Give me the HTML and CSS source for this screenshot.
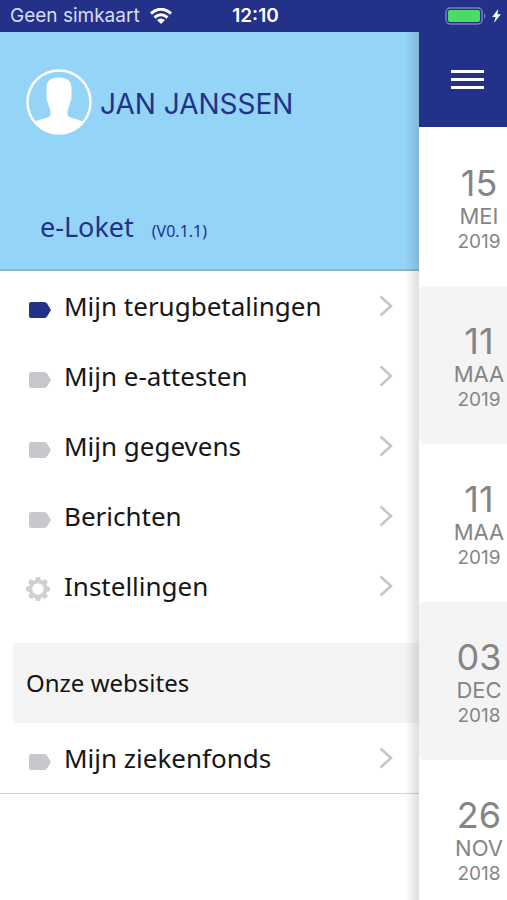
FILE: index.html
```html
<!DOCTYPE html>
<html lang="nl">
<head>
<meta charset="utf-8">
<meta name="viewport" content="width=device-width, initial-scale=1">
<title>e-Loket</title>
<link rel="stylesheet" href="styles.css">
</head>
<body>
<svg class="symbols" aria-hidden="true">
  <symbol id="tag" viewBox="0 0 22 16"><path d="M2 0h13q2 0 3 1.500L22 8l-4 6.500q-1 1.500-3 1.500H2q-2 0-2-2V2q0-2 2-2z"/></symbol>
  <symbol id="chevron" viewBox="0 0 14 22"><path d="M1.500 1.500 12 11 1.500 20.500" fill="none" stroke="currentColor" stroke-width="2.500"/></symbol>
</svg>
<header class="status">
  <div class="carrier">
    <span>Geen simkaart</span>
    <svg class="wifi" viewBox="0 0 22 16" aria-hidden="true"><path d="M1 5.500Q11-3 21 5.500M4.500 9.500Q11 4 17.500 9.500" fill="none" stroke="#fff" stroke-width="3"/><path d="M7 12q4-3 8 0L11 16z" fill="#fff"/></svg>
  </div>
  <time class="clock">12:10</time>
  <div class="power">
    <svg class="battery" viewBox="0 0 42 18" aria-hidden="true"><rect x="1" y="1" width="36" height="16" rx="4" fill="none" stroke="#7580bd" stroke-width="1.500"/><rect x="3" y="3" width="32" height="12" rx="2" fill="#4cdb62"/><path d="M39 6q3 3 0 6z" fill="#7580bd"/></svg>
    <svg class="bolt" viewBox="0 0 10 16" aria-hidden="true"><path d="M7 0 0 9h4l-2 7 8-10H6z" fill="#fff"/></svg>
  </div>
</header>
<div class="app">
  <aside class="drawer">
    <div class="profile">
      <div class="user">
        <svg class="avatar" viewBox="0 0 66 66" aria-hidden="true"><circle cx="33" cy="33" r="31.500" fill="none" stroke="#fff" stroke-width="2.500"/><path d="M33 8.500c8 0 12.500 3.500 12.500 10V28c0 4-1.500 5-2 8-.5 3-2 4-2 7v2c0 3 4 4 8 5 4 1 6 2 8.500 3A32 32 0 0 1 8 53c2.500-1 4.500-2 8.500-3 4-1 8-2 8-5v-2c0-3-1.500-4-2-7-.5-3-2-4-2-8v-9.500c0-6.500 4.500-10 12.500-10z" fill="#fff"/></svg>
        <span class="name">JAN JANSSEN</span>
      </div>
      <div class="brand"><h1>e-Loket</h1><span class="version">(V0.1.1)</span></div>
    </div>
    <nav>
      <ul class="menu">
        <li><a href="#terugbetalingen" class="active"><svg class="tag"><use href="#tag"/></svg><span>Mijn terugbetalingen</span><svg class="chevron"><use href="#chevron"/></svg></a></li>
        <li><a href="#attesten"><svg class="tag"><use href="#tag"/></svg><span>Mijn e-attesten</span><svg class="chevron"><use href="#chevron"/></svg></a></li>
        <li><a href="#gegevens"><svg class="tag"><use href="#tag"/></svg><span>Mijn gegevens</span><svg class="chevron"><use href="#chevron"/></svg></a></li>
        <li><a href="#berichten"><svg class="tag"><use href="#tag"/></svg><span>Berichten</span><svg class="chevron"><use href="#chevron"/></svg></a></li>
        <li><a href="#instellingen"><svg class="gear" viewBox="-12 -12 24 24"><circle r="7.500" fill="none" stroke="currentColor" stroke-width="3.500"/><g id="teeth"><path d="M-3.200-8-2-12h4l1.200 4zM-3.200 8-2 12h4l1.200-4z"/><path d="M-3.200-8-2-12h4l1.200 4zM-3.200 8-2 12h4l1.200-4z" transform="rotate(90)"/></g><use href="#teeth" transform="rotate(45)"/></svg><span>Instellingen</span><svg class="chevron"><use href="#chevron"/></svg></a></li>
      </ul>
      <h2>Onze websites</h2>
      <ul class="menu sites">
        <li><a href="#ziekenfonds"><svg class="tag"><use href="#tag"/></svg><span>Mijn ziekenfonds</span><svg class="chevron"><use href="#chevron"/></svg></a></li>
      </ul>
    </nav>
  </aside>
  <main class="page">
    <div class="toolbar"><button type="button" aria-label="Menu"><i></i><i></i><i></i></button></div>
    <ol class="dates">
      <li><b>15</b><span>MEI</span><small>2019</small></li>
      <li><b>11</b><span>MAA</span><small>2019</small></li>
      <li><b>11</b><span>MAA</span><small>2019</small></li>
      <li><b>03</b><span>DEC</span><small>2018</small></li>
      <li><b>26</b><span>NOV</span><small>2018</small></li>
    </ol>
  </main>
</div>
</body>
</html>
```
FILE: styles.css
```css
* { box-sizing: border-box; }
body {
  margin: 0;
  height: 100vh;
  display: flex;
  flex-direction: column;
  overflow: hidden;
  background: #fff;
  color: #161616;
  font-family: "Noto Sans", "Open Sans", sans-serif;
}
ul, ol { margin: 0; padding: 0; list-style: none; }
h1, h2 { margin: 0; font-weight: 400; }
.symbols { display: none; }

.status {
  flex: none;
  height: 32px;
  padding: 0 6px 0 10px;
  display: grid;
  grid-template-columns: 1fr auto 1fr;
  align-items: center;
  background: #243189;
  color: #fff;
  font: 19px/32px Inter, sans-serif;
}
.carrier { display: flex; align-items: center; gap: 10px; color: #d9dcf2; }
.wifi { width: 22px; height: 16px; }
.clock { font-weight: 600; }
.power { display: flex; justify-content: flex-end; align-items: center; gap: 5px; }
.battery { width: 42px; height: 18px; }
.bolt { width: 9px; height: 14px; }

.app {
  flex: 1;
  min-height: 0;
  display: grid;
  grid-template-columns: 1fr 88px;
}
.drawer {
  position: relative;
  min-width: 0;
}
/* Shade cast by the page on the drawer's right edge */
.drawer::after {
  content: "";
  position: absolute;
  inset: 0 0 0 auto;
  width: 14px;
  background: linear-gradient(to right, rgba(0, 0, 0, 0), rgba(0, 0, 0, 0.13));
  pointer-events: none;
}
.profile {
  height: 239px;
  padding: 37px 26px 24px;
  display: flex;
  flex-direction: column;
  justify-content: space-between;
  background: #94d4f6;
  border-bottom: 2px solid #8fb4cb;
  color: #243189;
}
.user { display: flex; align-items: center; gap: 8px; }
.avatar { width: 66px; height: 66px; }
.name { padding-top: 4px; font: 28px/32px Inter, sans-serif; }
.brand { display: flex; align-items: baseline; gap: 18px; padding-left: 14px; }
.brand h1 { font-size: 27px; line-height: 36px; }
.version { font-size: 16px; }

.menu a {
  height: 70px;
  padding: 0 26px 0 29px;
  display: flex;
  align-items: center;
  gap: 13px;
  color: #161616;
  text-decoration: none;
  font-size: 26px;
  line-height: 34px;
}
.menu span { flex: 1; }
.tag { width: 22px; height: 16px; margin-top: 8px; fill: #c8c8cc; }
.active .tag { fill: #243189; }
.gear { width: 24px; height: 24px; margin: 6px 1px 0 -3px; color: #d0d0d2; fill: currentColor; }
.chevron { width: 14px; height: 22px; color: #c5c5c7; }
h2 {
  margin: 22px 0 0 13px;
  padding: 0 13px;
  background: #f4f4f4;
  font-size: 24px;
  line-height: 80px;
}
.sites { border-bottom: 1px solid #d2d2d2; }

.page { min-width: 0; overflow: hidden; }
.toolbar {
  height: 95px;
  display: flex;
  align-items: center;
  padding-left: 32px;
  background: #243189;
}
.toolbar button {
  width: 33px;
  padding: 0;
  border: 0;
  background: none;
  display: grid;
  gap: 5px;
}
.toolbar i { height: 3px; background: #fff; }
.dates { width: 120px; padding-top: 1px; }
.dates li {
  height: 158px;
  padding-top: 34px;
  display: flex;
  flex-direction: column;
  align-items: center;
  border-radius: 6px;
  color: #858585;
  font-family: Inter, sans-serif;
}
.dates li:nth-child(even) { background: #f4f4f4; }
.dates b { font-weight: 400; font-size: 36px; line-height: 42px; }
.dates span { font-size: 22px; line-height: 24px; }
.dates small { font-size: 19px; line-height: 28px; }
```
